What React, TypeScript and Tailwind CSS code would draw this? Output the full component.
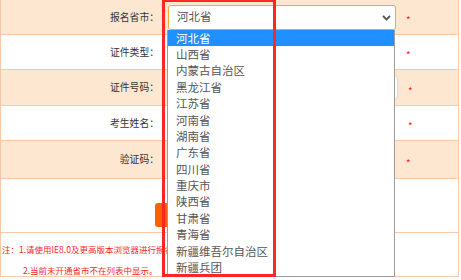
const provinces = [
  '河北省', '山西省', '内蒙古自治区', '黑龙江省', '江苏省', '河南省', '湖南省', '广东省',
  '四川省', '重庆市', '陕西省', '甘肃省', '青海省', '新疆维吾尔自治区', '新疆兵团',
];

function Star() {
  return <span className="text-[10px] leading-none text-[#ff1a1a]">*</span>;
}

function Row({ label, peach, h, children }: { label: string; peach?: boolean; h: string; children?: React.ReactNode }) {
  return (
    <div className={`flex items-center border-b border-[#f5c9a9] ${h} ${peach ? 'bg-[#fde7d0]' : 'bg-white'}`}>
      <div className="w-[158px] text-right text-[9.8px] text-[#333]">{label}</div>
      <div className="ml-[9px] flex items-center">{children}</div>
    </div>
  );
}

export default function App() {
  return (
    <div className="relative w-[461px] h-[280px] overflow-hidden bg-white font-['Noto_Sans_CJK_SC',sans-serif]">
      <div className="w-[459px] border-x border-[#f5c9a9]">
        <Row label="报名省市：" peach h="h-[35px]">
          <div className="flex h-[25px] w-[228px] items-center justify-between rounded-[3px] border border-[#f3a73a] bg-white pl-[8px] pr-[4px] text-[11.5px] text-[#555]">
            河北省
            <svg width="9" height="6" viewBox="0 0 9 6" className="mt-px">
              <polyline points="1,1 4.5,4.5 8,1" fill="none" stroke="#555" strokeWidth="1.8" />
            </svg>
          </div>
          <span className="ml-[10px]"><Star /></span>
        </Row>
        <Row label="证件类型：" h="h-[35px]">
          <div className="h-[22px] w-[228px]" />
          <span className="ml-[10px]"><Star /></span>
        </Row>
        <Row label="证件号码：" peach h="h-[36px]">
          <div className="h-[25px] w-[230px] rounded-[4px] border border-[#d8d8d8] bg-white" />
          <span className="ml-[10px]"><Star /></span>
        </Row>
        <Row label="考生姓名：" h="h-[35px]">
          <div className="h-[22px] w-[230px]" />
          <span className="ml-[10px]"><Star /></span>
        </Row>
        <Row label="验证码：" peach h="h-[38px]">
          <div className="h-[22px] w-[228px]" />
          <span className="ml-[10px]"><Star /></span>
        </Row>
        <div className="h-[54px] border-b border-[#f5c9a9] pl-[154px] pt-[24px]">
          <button className="h-[24px] w-[76px] rounded-[3px] bg-[#ff6100]" />
        </div>
        <div className="h-[44px] border-b border-[#f5c9a9] pl-[1px] pt-[6px] text-[8.5px] leading-[21px] text-[#ff1f1f]">
          <div>注：1.请使用IE8.0及更高版本浏览器进行报名。</div>
          <div className="pl-[21px]">2.当前未开通省市不在列表中显示。</div>
        </div>
      </div>

      <div className="absolute left-[167px] top-[30px] w-[228px] border-x border-b border-[#9c9c9c] bg-white text-[11.5px] text-[#555]">
        {provinces.map((p, i) => (
          <div
            key={p}
            className={`flex h-[16.4px] items-center pl-[8px] ${i === 0 ? 'bg-[#1e90ff] text-white' : ''}`}
          >
            {p}
          </div>
        ))}
      </div>

      <div className="absolute left-[162px] top-[-1px] h-[278px] w-[114px] border-[3px] border-[#ff2626]" />
    </div>
  );
}
